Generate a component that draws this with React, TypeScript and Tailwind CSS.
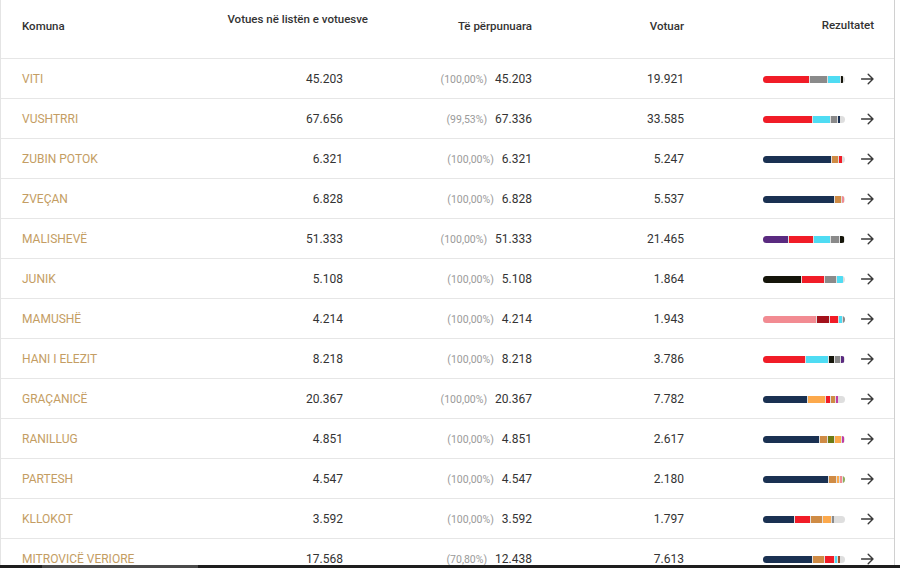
import React from "react";

type Seg = [string, number];

const C = {
  red: "#f11c27",
  gray: "#8a8a8a",
  cyan: "#4fdcf3",
  navy: "#1a3152",
  tan: "#cf8b45",
  purple: "#5a2a80",
  black: "#15150a",
  pink: "#f28b92",
  darkred: "#a3111b",
  orange: "#fca94c",
  olive: "#6b7b14",
  magenta: "#c23ca3",
  brown: "#a0522d",
  green: "#8fae5a",
};

const rows: {
  name: string;
  list: string;
  pct: string;
  proc: string;
  voted: string;
  bar: Seg[];
}[] = [
  { name: "VITI", list: "45.203", pct: "(100,00%)", proc: "45.203", voted: "19.921", bar: [[C.red, 46], [C.gray, 17], [C.cyan, 12], [C.black, 1.5]] },
  { name: "VUSHTRRI", list: "67.656", pct: "(99,53%)", proc: "67.336", voted: "33.585", bar: [[C.red, 49], [C.cyan, 16.5], [C.gray, 6.5], [C.navy, 1.5]] },
  { name: "ZUBIN POTOK", list: "6.321", pct: "(100,00%)", proc: "6.321", voted: "5.247", bar: [[C.navy, 68], [C.tan, 6], [C.red, 3]] },
  { name: "ZVEÇAN", list: "6.828", pct: "(100,00%)", proc: "6.828", voted: "5.537", bar: [[C.navy, 71], [C.tan, 6], [C.pink, 2]] },
  { name: "MALISHEVË", list: "51.333", pct: "(100,00%)", proc: "51.333", voted: "21.465", bar: [[C.purple, 25], [C.red, 24], [C.cyan, 16], [C.gray, 8], [C.black, 4]] },
  { name: "JUNIK", list: "5.108", pct: "(100,00%)", proc: "5.108", voted: "1.864", bar: [[C.black, 38], [C.red, 22], [C.gray, 11], [C.cyan, 6]] },
  { name: "MAMUSHË", list: "4.214", pct: "(100,00%)", proc: "4.214", voted: "1.943", bar: [[C.pink, 53], [C.darkred, 12], [C.red, 8], [C.cyan, 3], [C.gray, 2]] },
  { name: "HANI I ELEZIT", list: "8.218", pct: "(100,00%)", proc: "8.218", voted: "3.786", bar: [[C.red, 42], [C.cyan, 22], [C.black, 5], [C.gray, 5], [C.purple, 3]] },
  { name: "GRAÇANICË", list: "20.367", pct: "(100,00%)", proc: "20.367", voted: "7.782", bar: [[C.navy, 44], [C.orange, 17], [C.red, 4], [C.tan, 3.5], [C.magenta, 2.5]] },
  { name: "RANILLUG", list: "4.851", pct: "(100,00%)", proc: "4.851", voted: "2.617", bar: [[C.navy, 56], [C.tan, 7], [C.olive, 6], [C.orange, 6], [C.magenta, 2]] },
  { name: "PARTESH", list: "4.547", pct: "(100,00%)", proc: "4.547", voted: "2.180", bar: [[C.navy, 65], [C.tan, 7], [C.orange, 2], [C.pink, 1.5], [C.green, 2]] },
  { name: "KLLOKOT", list: "3.592", pct: "(100,00%)", proc: "3.592", voted: "1.797", bar: [[C.navy, 31], [C.red, 15], [C.tan, 11], [C.orange, 8], [C.gray, 2]] },
  { name: "MITROVICË VERIORE", list: "17.568", pct: "(70,80%)", proc: "12.438", voted: "7.613", bar: [[C.navy, 49], [C.tan, 11], [C.red, 9], [C.cyan, 2], [C.brown, 1.5]] },
];

function Arrow() {
  return (
    <svg width="13" height="12" viewBox="0 0 13 12" className="shrink-0">
      <path d="M0.5 6H12M7.2 1.2L12 6L7.2 10.8" fill="none" stroke="#3a3a3a" strokeWidth="1.4" strokeLinecap="round" strokeLinejoin="round" />
    </svg>
  );
}

function Bar({ segs }: { segs: Seg[] }) {
  return (
    <div className="flex h-[7px] w-[82px] gap-[1px] overflow-hidden rounded-full bg-[#dedede]">
      {segs.map(([c, w], i) => (
        <div key={i} className="h-full shrink-0" style={{ width: `${w}px`, backgroundColor: c }} />
      ))}
    </div>
  );
}

export default function App() {
  return (
    <div
      className="flex h-[568px] w-[900px] flex-col overflow-hidden bg-white text-[12px] text-[#333]"
      style={{ fontFamily: "Roboto, 'Liberation Sans', sans-serif" }}
    >
      <div className="min-h-0 flex-1 overflow-hidden">
        <div className="w-[895px] border-x border-l-[#e4e4e4] border-r-[#d0d0d0]">
          <div className="flex h-[59px] border-b border-[#e6e6e6] text-[11.5px] font-medium text-[#333]">
            <div className="w-[199px] pl-[21px] pt-[18px]">Komuna</div>
            <div className="w-[168px] pt-[11px] text-right">Votues në listën e votuesve</div>
            <div className="w-[164px] pt-[18px] text-right">Të përpunuara</div>
            <div className="w-[152px] pt-[18px] text-right">Votuar</div>
            <div className="w-[190px] pt-[17px] text-right">Rezultatet</div>
          </div>
          {rows.map((r) => (
            <div key={r.name} className="flex h-[40px] items-center border-b border-[#e6e6e6] pt-px">
              <div className="w-[199px] pl-[21px] text-[#c49d63]">{r.name}</div>
              <div className="w-[143px] text-right">{r.list}</div>
              <div className="flex w-[189px] items-baseline justify-end gap-[8px]">
                <span className="text-[10.5px] text-[#9a9a9a]">{r.pct}</span>
                <span>{r.proc}</span>
              </div>
              <div className="w-[152px] text-right">{r.voted}</div>
              <div className="flex w-[190px] items-center justify-end gap-[16px]">
                <Bar segs={r.bar} />
                <Arrow />
              </div>
            </div>
          ))}
        </div>
      </div>
      <div className="flex h-[3px] shrink-0 bg-[#1e1e1e]">
        <div className="ml-[42px] h-full w-[156px] bg-[#4a4a4a]" />
      </div>
    </div>
  );
}
